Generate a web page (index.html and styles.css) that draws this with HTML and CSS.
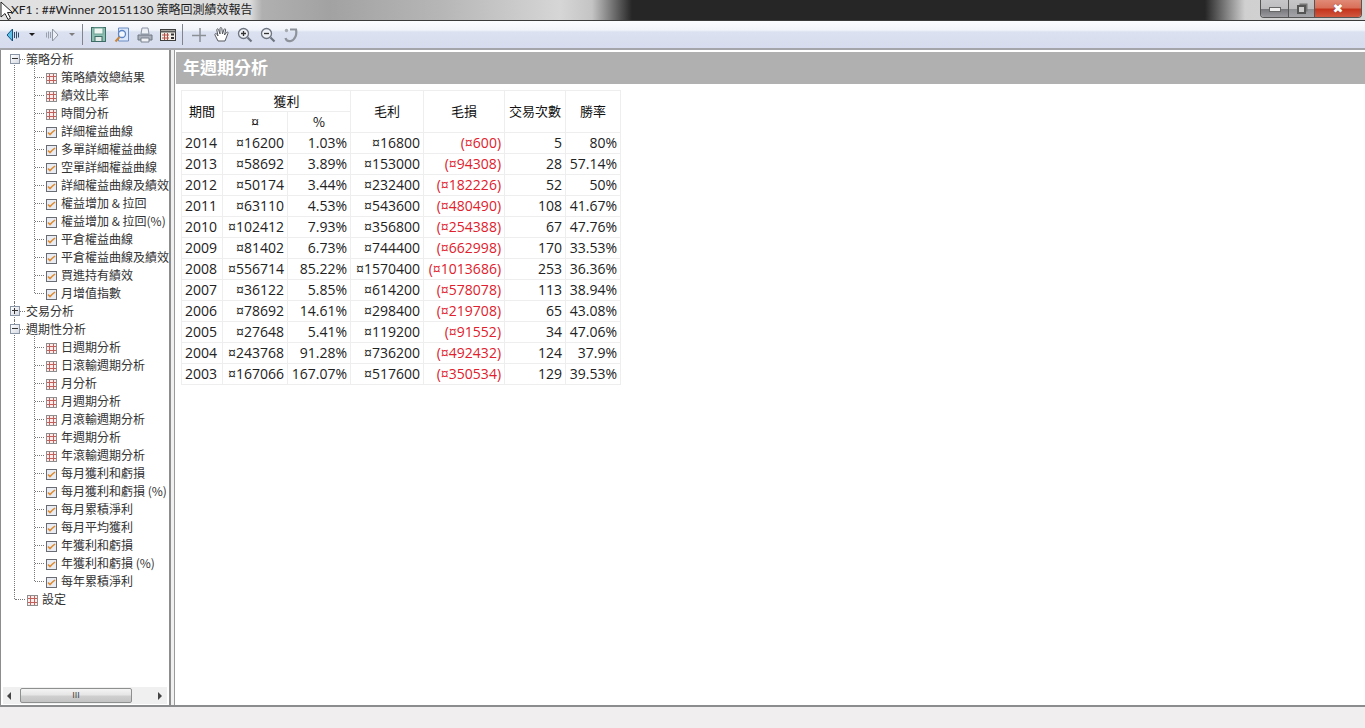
FILE: index.html
```html
<!DOCTYPE html>
<html lang="zh-Hant">
<head>
<meta charset="utf-8">
<title>績效報告</title>
<link rel="stylesheet" href="styles.css">
</head>
<body>
<svg class="defs" width="0" height="0">
  <symbol id="i-table" viewBox="0 0 11 11">
    <rect x=".5" y=".5" width="10" height="10" fill="#fbeeec" stroke="#8f8f8f"/>
    <path d="M1 3.500h9M1 7.500h9M3.500 1v9M7.500 1v9" stroke="#c4605c" fill="none"/>
  </symbol>
  <symbol id="i-chart" viewBox="0 0 11 11">
    <rect x=".5" y=".5" width="10" height="10" fill="#e9ecf3" stroke="#6a6c74"/>
    <path d="M2 5.500l2 2 2-2 3-2.500" stroke="#dc8a30" stroke-width="1.600" fill="none"/>
  </symbol>
</svg>
<div class="window">
  <header class="titlebar">
    <span class="title">XF1 : ##Winner 20151130 策略回測績效報告</span>
    <div class="wincontrols">
      <span class="wbtn wmin"><i></i></span>
      <span class="wbtn wmax"><i></i></span>
      <span class="wbtn wclose">✖</span>
    </div>
  </header>
  <svg class="cursor" width="14" height="20" viewBox="0 0 14 20"><path d="M1 1v15l4-3.500 3 6 2.500-1.200-3-5.800h5z" fill="#fff" stroke="#222"/></svg>
  <nav class="toolbar">
    <span class="tb tb-first"><svg width="14" height="16" viewBox="0 0 14 16"><path d="M6.500 2L1 8l5.500 6z" fill="#5cc0e8" stroke="#14527f"/><path d="M8.500 5v6M10.500 4.500v7M12.500 5.500v5" stroke="#2d4f6b"/></svg></span>
    <span class="tb-drop"><i></i></span>
    <span class="tb tb-fwd"><svg width="14" height="16" viewBox="0 0 14 16"><path d="M7.500 2L13 8l-5.500 6z" fill="#eceff6" stroke="#8f96a3"/><path d="M1.500 5.500v5M3.500 4.500v7M5.500 5v6" stroke="#9aa0ac"/></svg></span>
    <span class="tb-drop tb-drop-off"><i></i></span>
    <span class="tb-sep"></span>
    <span class="tb"><svg width="15" height="15" viewBox="0 0 15 15"><rect x=".5" y=".5" width="14" height="14" fill="#8dbfb2" stroke="#3d6d66"/><rect x="3" y="1" width="9" height="6" fill="#eef6f2" stroke="#6fa395"/><rect x="4" y="9.500" width="7" height="5" fill="#e3ece8" stroke="#3d6d66"/></svg></span>
    <span class="tb"><svg width="16" height="16" viewBox="0 0 16 16"><path d="M4.500 1h10v13h-10z" fill="#dbe7fa" stroke="#6c8dc4"/><circle cx="8" cy="7" r="3.500" fill="#f3f8ff" stroke="#5b85c4" stroke-width="1.300"/><path d="M5.500 10L1.500 14.500" stroke="#c9853a" stroke-width="2"/></svg></span>
    <span class="tb"><svg width="16" height="16" viewBox="0 0 16 16"><path d="M5 1h6l1 6H4z" fill="#eef1f6" stroke="#8a93a3"/><path d="M1 8h14v5H1z" fill="#aab1bd" stroke="#6f7682"/><path d="M4 11h8v4H4z" fill="#f0f2f5" stroke="#7c838f"/></svg></span>
    <span class="tb"><svg width="16" height="12" viewBox="0 0 16 12"><rect x=".5" y=".5" width="15" height="11" fill="#f3efe6" stroke="#3f3f3f"/><path d="M.5 2.500h15" stroke="#5a5a5a" stroke-width="2"/><path d="M2 6h7M2 9h7M4.500 4v7M7.500 4v7" stroke="#b4504a"/><rect x="11" y="4.500" width="3" height="2" fill="#333"/><rect x="11" y="8" width="3" height="2" fill="#333"/></svg></span>
    <span class="tb-sep tb-sep2"></span>
    <span class="tb"><svg width="16" height="16" viewBox="0 0 16 16"><path d="M9 1v14M1 8.500h14" stroke="#8b8f96" stroke-width="1.500" fill="none"/></svg></span>
    <span class="tb"><svg width="17" height="17" viewBox="0 0 17 17"><path d="M5 15L2 9c-.6-1.300 1-2 2-.7L5 10 3.800 4c-.2-1.300 1.400-1.600 1.800-.4L7 8 7 2.500c0-1.300 1.700-1.300 1.800 0L9.500 8 11 3.500c.4-1.200 1.900-.8 1.600.5L11.500 9l2-2.500c.8-1 2-.2 1.400.9L12 15z" fill="#fff" stroke="#55585e"/></svg></span>
    <span class="tb"><svg width="16" height="16" viewBox="0 0 16 16"><circle cx="6.500" cy="6.500" r="5" fill="#eef1f5" stroke="#6d7480" stroke-width="1.300"/><path d="M4 6.500h5M6.500 4v5" stroke="#333" stroke-width="1.300"/><path d="M10.500 10.500l4 4" stroke="#6d7480" stroke-width="2.200"/></svg></span>
    <span class="tb"><svg width="16" height="16" viewBox="0 0 16 16"><circle cx="6.500" cy="6.500" r="5" fill="#eef1f5" stroke="#6d7480" stroke-width="1.300"/><path d="M4 6.500h5" stroke="#333" stroke-width="1.300"/><path d="M10.500 10.500l4 4" stroke="#6d7480" stroke-width="2.200"/></svg></span>
    <span class="tb"><svg width="16" height="16" viewBox="0 0 16 16"><path d="M7 2.500h6c1 4.500-.5 10-5 11.500-3 .6-5-1-5.500-3" fill="none" stroke="#8e939b" stroke-width="2.200"/><circle cx="3.500" cy="3.500" r="1.700" fill="#a6abb2"/></svg></span>
  </nav>
  <main class="panes">
    <aside class="treepane">
      <div class="treescroll">
        <ul class="tree tree-root">
          <li class="node">
            <span class="row top"><span class="exp minus"></span><span class="label">策略分析</span></span>
            <ul class="tree tree-sub">
              <li class="leaf"><svg class="ico"><use href="#i-table"/></svg><span class="label">策略績效總結果</span></li>
              <li class="leaf"><svg class="ico"><use href="#i-table"/></svg><span class="label">績效比率</span></li>
              <li class="leaf"><svg class="ico"><use href="#i-table"/></svg><span class="label">時間分析</span></li>
              <li class="leaf"><svg class="ico"><use href="#i-chart"/></svg><span class="label">詳細權益曲線</span></li>
              <li class="leaf"><svg class="ico"><use href="#i-chart"/></svg><span class="label">多單詳細權益曲線</span></li>
              <li class="leaf"><svg class="ico"><use href="#i-chart"/></svg><span class="label">空單詳細權益曲線</span></li>
              <li class="leaf"><svg class="ico"><use href="#i-chart"/></svg><span class="label">詳細權益曲線及績效</span></li>
              <li class="leaf"><svg class="ico"><use href="#i-chart"/></svg><span class="label">權益增加 &amp; 拉回</span></li>
              <li class="leaf"><svg class="ico"><use href="#i-chart"/></svg><span class="label">權益增加 &amp; 拉回(%)</span></li>
              <li class="leaf"><svg class="ico"><use href="#i-chart"/></svg><span class="label">平倉權益曲線</span></li>
              <li class="leaf"><svg class="ico"><use href="#i-chart"/></svg><span class="label">平倉權益曲線及績效</span></li>
              <li class="leaf"><svg class="ico"><use href="#i-chart"/></svg><span class="label">買進持有績效</span></li>
              <li class="leaf"><svg class="ico"><use href="#i-chart"/></svg><span class="label">月增值指數</span></li>
            </ul>
          </li>
          <li class="node">
            <span class="row top"><span class="exp plus"></span><span class="label">交易分析</span></span>
          </li>
          <li class="node">
            <span class="row top"><span class="exp minus"></span><span class="label">週期性分析</span></span>
            <ul class="tree tree-sub">
              <li class="leaf"><svg class="ico"><use href="#i-table"/></svg><span class="label">日週期分析</span></li>
              <li class="leaf"><svg class="ico"><use href="#i-table"/></svg><span class="label">日滾輸週期分析</span></li>
              <li class="leaf"><svg class="ico"><use href="#i-table"/></svg><span class="label">月分析</span></li>
              <li class="leaf"><svg class="ico"><use href="#i-table"/></svg><span class="label">月週期分析</span></li>
              <li class="leaf"><svg class="ico"><use href="#i-table"/></svg><span class="label">月滾輸週期分析</span></li>
              <li class="leaf"><svg class="ico"><use href="#i-table"/></svg><span class="label">年週期分析</span></li>
              <li class="leaf"><svg class="ico"><use href="#i-table"/></svg><span class="label">年滾輸週期分析</span></li>
              <li class="leaf"><svg class="ico"><use href="#i-chart"/></svg><span class="label">每月獲利和虧損</span></li>
              <li class="leaf"><svg class="ico"><use href="#i-chart"/></svg><span class="label">每月獲利和虧損 (%)</span></li>
              <li class="leaf"><svg class="ico"><use href="#i-chart"/></svg><span class="label">每月累積淨利</span></li>
              <li class="leaf"><svg class="ico"><use href="#i-chart"/></svg><span class="label">每月平均獲利</span></li>
              <li class="leaf"><svg class="ico"><use href="#i-chart"/></svg><span class="label">年獲利和虧損</span></li>
              <li class="leaf"><svg class="ico"><use href="#i-chart"/></svg><span class="label">年獲利和虧損 (%)</span></li>
              <li class="leaf"><svg class="ico"><use href="#i-chart"/></svg><span class="label">每年累積淨利</span></li>
            </ul>
          </li>
          <li class="node last">
            <span class="row top settings"><svg class="ico"><use href="#i-table"/></svg><span class="label">設定</span></span>
          </li>
        </ul>
      </div>
      <div class="hscroll">
        <span class="arrow arrow-l"></span>
        <span class="track"><span class="thumb">III</span></span>
        <span class="arrow arrow-r"></span>
      </div>
    </aside>
    <div class="splitter"></div>
    <section class="report">
      <h1 class="report-title">年週期分析</h1>
      <table class="grid">
        <colgroup>
          <col class="c1"><col class="c2"><col class="c3"><col class="c4"><col class="c5"><col class="c6"><col class="c7">
        </colgroup>
        <thead>
          <tr><th rowspan="2">期間</th><th colspan="2">獲利</th><th rowspan="2">毛利</th><th rowspan="2">毛損</th><th rowspan="2">交易次數</th><th rowspan="2">勝率</th></tr>
          <tr><th>¤</th><th>%</th></tr>
        </thead>
        <tbody>
          <tr><td class="yr">2014</td><td>¤16200</td><td>1.03%</td><td>¤16800</td><td class="neg">(¤600)</td><td>5</td><td>80%</td></tr>
          <tr><td class="yr">2013</td><td>¤58692</td><td>3.89%</td><td>¤153000</td><td class="neg">(¤94308)</td><td>28</td><td>57.14%</td></tr>
          <tr><td class="yr">2012</td><td>¤50174</td><td>3.44%</td><td>¤232400</td><td class="neg">(¤182226)</td><td>52</td><td>50%</td></tr>
          <tr><td class="yr">2011</td><td>¤63110</td><td>4.53%</td><td>¤543600</td><td class="neg">(¤480490)</td><td>108</td><td>41.67%</td></tr>
          <tr><td class="yr">2010</td><td>¤102412</td><td>7.93%</td><td>¤356800</td><td class="neg">(¤254388)</td><td>67</td><td>47.76%</td></tr>
          <tr><td class="yr">2009</td><td>¤81402</td><td>6.73%</td><td>¤744400</td><td class="neg">(¤662998)</td><td>170</td><td>33.53%</td></tr>
          <tr><td class="yr">2008</td><td>¤556714</td><td>85.22%</td><td>¤1570400</td><td class="neg">(¤1013686)</td><td>253</td><td>36.36%</td></tr>
          <tr><td class="yr">2007</td><td>¤36122</td><td>5.85%</td><td>¤614200</td><td class="neg">(¤578078)</td><td>113</td><td>38.94%</td></tr>
          <tr><td class="yr">2006</td><td>¤78692</td><td>14.61%</td><td>¤298400</td><td class="neg">(¤219708)</td><td>65</td><td>43.08%</td></tr>
          <tr><td class="yr">2005</td><td>¤27648</td><td>5.41%</td><td>¤119200</td><td class="neg">(¤91552)</td><td>34</td><td>47.06%</td></tr>
          <tr><td class="yr">2004</td><td>¤243768</td><td>91.28%</td><td>¤736200</td><td class="neg">(¤492432)</td><td>124</td><td>37.9%</td></tr>
          <tr><td class="yr">2003</td><td>¤167066</td><td>167.07%</td><td>¤517600</td><td class="neg">(¤350534)</td><td>129</td><td>39.53%</td></tr>
        </tbody>
      </table>
    </section>
  </main>
  <footer class="statusbar"></footer>
</div>
</body>
</html>
```
FILE: styles.css
```css
* { box-sizing: border-box; }
html, body { margin: 0; padding: 0; height: 100%; overflow: hidden; }
body { font-family: "Open Sans", "Noto Sans CJK TC", sans-serif; color: #222; background: #f0eeee; }
.defs { position: absolute; }
.window { position: relative; height: 728px; display: flex; flex-direction: column; }

.titlebar {
  height: 21px; flex: none; display: flex; align-items: flex-start; justify-content: space-between;
  border-bottom: 1px solid #3a3a3a;
  background: linear-gradient(90deg, #e2e2e2 0, #dcdcdc 250px, #b0b0b0 262px, #a2a2a2 330px, #b6b6b6 440px, #d6d6d6 560px, #c4c4c4 592px, #262626 632px, #262626 1205px, #d0d0d0 1245px, #d4d4d4 100%);
}
.title { font: 12px/20px Lato, "Noto Sans CJK TC", sans-serif; color: #1c1c1c; padding-left: 11px; white-space: nowrap; }
.wincontrols { display: flex; height: 18px; margin-right: 3px; border: 1px solid #555; border-top: 0; border-radius: 0 0 4px 4px; overflow: hidden; }
.wbtn { display: flex; align-items: center; justify-content: center; }
.wmin { width: 28px; background: linear-gradient(180deg, #c6c6c8 0, #bdbdc0 50%, #77787c 55%, #9a9a9f 100%); border-right: 1px solid #555; }
.wmin i { width: 12px; height: 5px; background: #eee; border: 1px solid #666; margin-top: 2px; }
.wmax { width: 26px; background: linear-gradient(180deg, #c6c6c8 0, #bdbdc0 50%, #8f9094 55%, #a5a5a9 100%); border-right: 1px solid #555; }
.wmax i { width: 9px; height: 9px; border: 2px solid #555; background: #ccc; box-shadow: 2px -2px 0 -.5px #777; margin-top: 1px; }
.wclose { width: 46px; background: linear-gradient(180deg, #e08a76 0, #d9705a 45%, #c5341c 55%, #d0583f 100%); color: #fff; font: 700 13px/16px "DejaVu Sans", sans-serif; text-shadow: 0 0 1px #722; }

.cursor { position: absolute; left: 0; top: 1px; }

.toolbar {
  height: 29px; flex: none; display: flex; align-items: center; padding-left: 1px;
  background: linear-gradient(180deg, #fbfcfe 0, #f1f4fa 9px, #dbe1f0 11px, #d7dcee 100%);
  border-bottom: 2px solid #a3a5aa;
}
.tb { width: 23px; display: flex; align-items: center; justify-content: center; flex: none; }
.tb-first { width: 24px; }
.tb-fwd { width: 26px; }
.tb-drop { width: 14px; flex: none; display: flex; justify-content: center; }
.tb-drop i { width: 0; height: 0; border: 3px solid transparent; border-top: 3px solid #1b1b1b; border-bottom: 0; }
.tb-drop-off i { border-top-color: #7f7f7f; }
.tb-sep { width: 1px; height: 21px; background: #80848c; margin: 0 4px 0 3px; flex: none; }
.tb-sep2 { margin-left: 3px; margin-right: 4px; }

.panes { flex: 1; min-height: 0; display: flex; background: #fff; border-bottom: 2px solid #8b8c8e; }

.treepane { width: 171px; flex: none; display: flex; flex-direction: column; border-left: 1px solid #8d8d8d; border-right: 2px solid #8d8d8d; background: #fff; }
.treescroll { flex: 1; min-height: 0; overflow: hidden; }
ul.tree { list-style: none; margin: 0; padding: 0; }
.tree-root { position: relative; }
.node { position: relative; }
.node::before { content: ""; position: absolute; left: 13px; top: 0; bottom: 0; border-left: 1px dotted #777; }
.node:first-child::before { top: 9px; }
.node.last::before { bottom: 9px; }
.row { display: flex; align-items: center; height: 18px; position: relative; white-space: nowrap; }
.row.top { padding-left: 9px; }
.row.top::after { content: ""; position: absolute; left: 19px; top: 9px; width: 5px; border-top: 1px dotted #777; }
.row.settings::after { left: 14px; width: 10px; }
.exp { width: 10px; height: 10px; flex: none; border: 1px solid #8a95a5; background: linear-gradient(135deg, #fff, #d6dae2); position: relative; z-index: 1; margin-right: 6px; }
.exp::before { content: ""; position: absolute; left: 1px; right: 1px; top: 3px; height: 2px; border-top: 1px solid #333; }
.exp.plus::after { content: ""; position: absolute; top: 1px; bottom: 1px; left: 3px; border-left: 1px solid #333; }
.label { font: 12px/18px "Noto Sans CJK TC", sans-serif; color: #333; }
.row.settings { padding-left: 26px; }
.row.settings .ico { margin-right: 4px; }
.ico { display: block; width: 11px; height: 11px; flex: none; align-self: flex-start; margin-top: 5px; }
.tree-sub { position: relative; }
.tree-sub::before { content: ""; position: absolute; left: 33px; top: -9px; bottom: 9px; border-left: 1px dotted #777; }
.leaf { display: flex; align-items: center; height: 18px; padding-left: 45px; position: relative; white-space: nowrap; }
.leaf::before { content: ""; position: absolute; left: 34px; top: 9px; width: 9px; border-top: 1px dotted #777; }
.leaf .ico { margin-right: 4px; }

.hscroll { height: 17px; flex: none; margin: 0 2px 1px 2px; display: flex; align-items: center; background: #f0f0f0; }
.arrow { width: 17px; flex: none; height: 100%; position: relative; }
.arrow::before { content: ""; position: absolute; top: 5px; border: 4px solid transparent; }
.arrow-l::before { left: 4px; border-right-color: #444; border-left: 0; }
.arrow-r::before { right: 5px; border-left-color: #444; border-right: 0; }
.track { flex: 1; height: 100%; padding: 1px 0; }
.thumb { display: block; width: 112px; height: 100%; border: 1px solid #8e8f8f; border-radius: 2px; background: linear-gradient(180deg, #f4f4f4 0, #e6e6e6 45%, #cfcfcf 55%, #c4c4c4 100%); text-align: center; font: 9px/13px "Liberation Sans", sans-serif; color: #444; }

.splitter { width: 4px; flex: none; background: #f0f0f0; border-right: 1px solid #9a9a9a; }

.report { flex: 1; min-width: 0; padding: 2px 0 0 1px; background: #fff; }
.report-title { margin: 0; height: 32px; background: #b0b0b0; color: #fff; font: 700 17px/30px "Noto Sans CJK TC", sans-serif; padding-left: 7px; }
.grid { border-collapse: collapse; table-layout: fixed; width: 439px; margin: 6px 0 0 5px; font-size: 14px; color: #222; }
.grid col.c1 { width: 41px; }
.grid col.c2 { width: 65px; }
.grid col.c3 { width: 63px; }
.grid col.c4 { width: 73px; }
.grid col.c5 { width: 81px; }
.grid col.c6 { width: 61px; }
.grid col.c7 { width: 55px; }
.grid th, .grid td { border: 1px solid #eeeeee; padding: 0 3px; height: 21px; line-height: 18px; white-space: nowrap; overflow: hidden; }
.grid th { font: 400 13px/18px "Noto Sans CJK TC", sans-serif; text-align: center; color: #111; padding: 0; }
.grid th[rowspan] { padding-bottom: 2px; }
.grid td { text-align: right; }
.grid td.yr { text-align: left; }
.grid td.neg { color: #e0202c; padding-right: 3px; }
.statusbar { height: 21px; flex: none; background: #f0eeee; }
```
